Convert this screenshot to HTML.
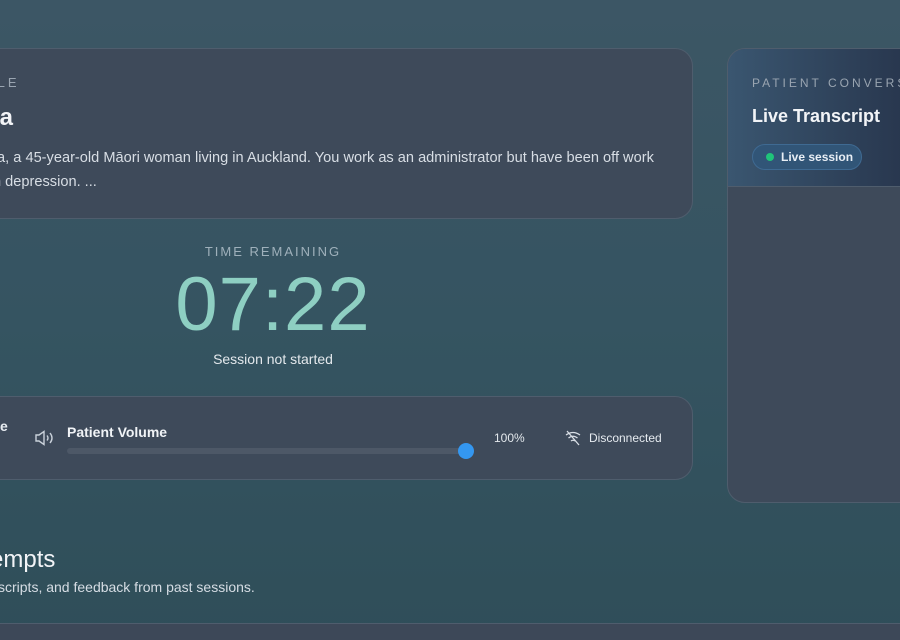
<!DOCTYPE html>
<html><head><meta charset="utf-8"><style>
*{margin:0;padding:0;box-sizing:border-box}
body{width:900px;height:640px;overflow:hidden;position:relative;font-family:"Liberation Sans",sans-serif;background:linear-gradient(180deg,#3c5665 0%,#355461 50%,#2f4e59 100%);color:#e8edf2}
.card{position:absolute;background:#3e4a5a;border:1px solid #4f5d6d;border-radius:18px}
.lbl{font-size:13px;letter-spacing:3px;color:#9aa5b1}
</style></head><body>
<div class="card" style="left:-30px;top:48px;width:723px;height:171px">
  <div class="lbl" style="position:absolute;left:20px;top:26px">ILE</div>
  <div style="position:absolute;left:22px;top:55px;font-size:24px;font-weight:bold;color:#f2f4f7">ia</div>
  <div style="position:absolute;left:22px;top:97px;font-size:14.6px;line-height:24px;color:#d8dee5;width:720px">ta, a 45-year-old Māori woman living in Auckland. You work as an administrator but have been off work<br>h depression. ...</div>
</div>
<div style="position:absolute;left:0;width:546px;top:244px;text-align:center">
  <div class="lbl" style="font-size:13px;letter-spacing:2px;color:#9fb0bb">TIME REMAINING</div>
  <div style="font-size:76px;color:#8ecfc2;line-height:80px;margin-top:6px;letter-spacing:1px">07:22</div>
  <div style="font-size:14px;color:#e3e8ec;margin-top:6px">Session not started</div>
</div>
<div class="card" style="left:-30px;top:396px;width:723px;height:84px">
  <div style="position:absolute;left:29px;top:21px;font-size:14px;font-weight:bold">e</div>
  <svg style="position:absolute;left:63px;top:33px" width="22" height="16" viewBox="0 0 22 16" fill="none" stroke="#c9d1da" stroke-width="1.4"><path d="M2 5h3l5-3.5v13L5 11H2z"/><path d="M13 5.5q2 2.5 0 5"/><path d="M16 3q4 5 0 10"/></svg>
  <div style="position:absolute;left:96px;top:27px;font-size:14px;font-weight:bold;color:#f0f3f6">Patient Volume</div>
  <div style="position:absolute;left:96px;top:51px;width:400px;height:6px;border-radius:3px;background:#4d5867"></div>
  <div style="position:absolute;left:487px;top:46px;width:16px;height:16px;border-radius:50%;background:#3497f0"></div>
  <div style="position:absolute;left:523px;top:34px;font-size:12px;color:#e3e8ec">100%</div>
  <svg style="position:absolute;left:594px;top:33px" width="16" height="16" viewBox="0 0 16 16" fill="none" stroke="#d9dfe6" stroke-width="1.3"><path d="M1 5q7-5 14 0M3.5 8q4.5-3.5 9 0M6 11q2-1.5 4 0"/><path d="M2 1l12 14"/></svg>
  <div style="position:absolute;left:618px;top:34px;font-size:12px;color:#e6ebf0">Disconnected</div>
</div>
<div style="position:absolute;left:-10px;top:546px;font-size:24px;color:#f2f4f7">empts</div>
<div style="position:absolute;left:-2px;top:579px;font-size:14px;color:#d6dde4">scripts, and feedback from past sessions.</div>
<div style="position:absolute;left:0;top:623px;width:900px;height:17px;background:#3d4858;border-top:1px solid #4f5d6d"></div>
<div style="position:absolute;left:727px;top:48px;width:200px;height:455px;border-radius:18px;overflow:hidden;border:1px solid #4f5d6d;background:#3e4a5a">
  <div style="height:138px;background:linear-gradient(90deg,#3a5670,#26334a);border-bottom:1px solid #4f5d6d;position:relative">
    <div class="lbl" style="position:absolute;left:24px;top:27px;white-space:nowrap;font-size:12px">PATIENT CONVERSATION</div>
    <div style="position:absolute;left:24px;top:57px;font-size:18px;font-weight:bold;color:#f2f4f7">Live Transcript</div>
    <div style="position:absolute;left:24px;top:95px;width:110px;height:26px;border-radius:13px;background:#315577;border:1px solid #3f6a92;font-size:12px;font-weight:bold;line-height:24px;padding-left:28px;color:#e8eef5">Live session<span style="position:absolute;left:13px;top:8px;width:8px;height:8px;border-radius:50%;background:#1fc47a"></span></div>
  </div>
</div>
</body></html>
